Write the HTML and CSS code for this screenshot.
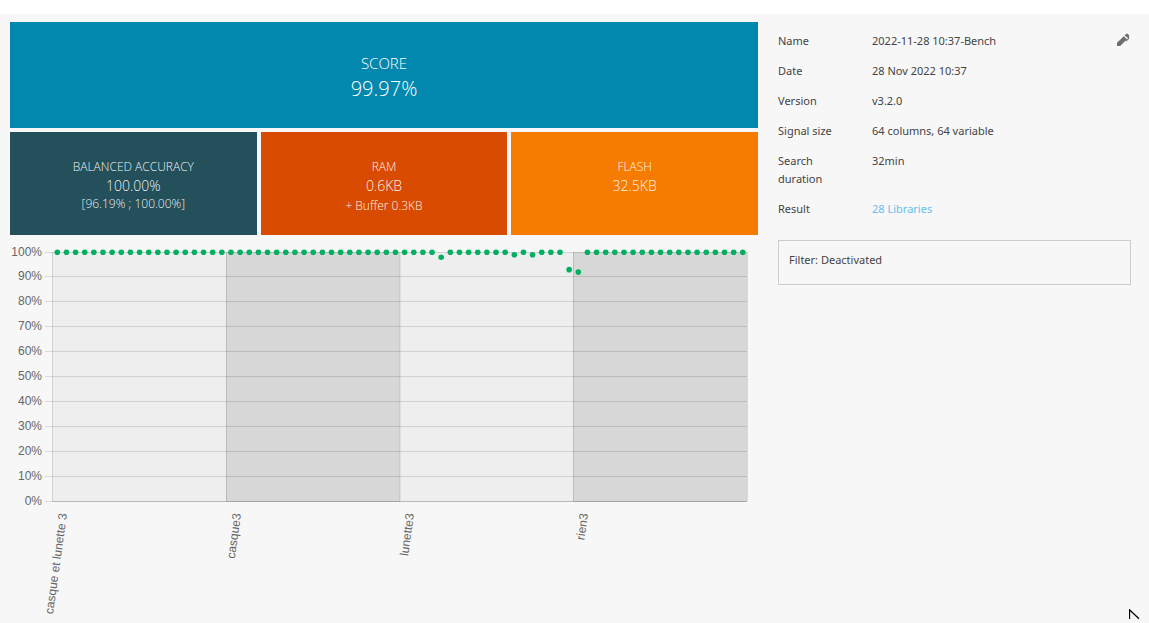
FILE: index.html
```html
<!DOCTYPE html>
<html lang="en">
<head>
<meta charset="utf-8">
<meta name="viewport" content="width=device-width, initial-scale=1">
<title>Benchmark result</title>
<link rel="stylesheet" href="styles.css">
</head>
<body>
<main class="panel">
  <section class="results">
    <div class="tiles">
      <div class="tile tile-score">
        <span class="score-label">SCORE</span>
        <span class="score-value">99.97%</span>
      </div>
      <div class="tile tile-accuracy">
        <span class="tile-label">BALANCED ACCURACY</span>
        <span class="tile-value">100.00%</span>
        <span class="tile-note">[96.19% ; 100.00%]</span>
      </div>
      <div class="tile tile-ram">
        <span class="tile-label">RAM</span>
        <span class="tile-value">0.6KB</span>
        <span class="tile-note tile-note-buffer">+ Buffer 0.3KB</span>
      </div>
      <div class="tile tile-flash">
        <span class="tile-label">FLASH</span>
        <span class="tile-value">32.5KB</span>
      </div>
    </div>
    <svg class="chart" viewBox="10 240 748 380" role="img" aria-label="Accuracy per class">
      <g class="bands">
        <rect class="band-light" x="52" y="252" width="174" height="250"/>
        <rect class="band-dark" x="226" y="252" width="174" height="250"/>
        <rect class="band-light" x="400" y="252" width="173" height="250"/>
        <rect class="band-dark" x="573" y="252" width="174" height="250"/>
      </g>
      <path class="grid-line" d="M45 252.5H747M45 276.5H747M45 301.5H747M45 326.5H747M45 351.5H747M45 376.5H747M45 401.5H747M45 426.5H747M45 451.5H747M45 476.5H747M45 501.5H747"/>
      <path class="grid-line" d="M52.5 252V501M226.5 252V501M400 252V501M573.5 252V501M747.5 252V501M52 501.5H747"/>
      <g class="axis-y">
        <text x="42" y="256">100%</text>
        <text x="42" y="280">90%</text>
        <text x="42" y="305">80%</text>
        <text x="42" y="330">70%</text>
        <text x="42" y="355">60%</text>
        <text x="42" y="380">50%</text>
        <text x="42" y="405">40%</text>
        <text x="42" y="430">30%</text>
        <text x="42" y="455">20%</text>
        <text x="42" y="480">10%</text>
        <text x="42" y="505">0%</text>
      </g>
      <g class="axis-x">
        <text transform="translate(67 514) rotate(-82)">casque et lunette 3</text>
        <text transform="translate(241 514) rotate(-82)">casque3</text>
        <text transform="translate(414 514) rotate(-82)">lunette3</text>
        <text transform="translate(588 514) rotate(-82)">rien3</text>
      </g>
      <g class="points" id="points"></g>
    </svg>
  </section>
  <aside class="details">
    <dl class="facts">
      <div class="fact">
        <dt>Name</dt>
        <dd>2022-11-28 10:37-Bench</dd>
        <dd class="fact-action">
          <button class="edit" type="button" aria-label="Edit name">
            <svg viewBox="0 0 14 14" width="14" height="14"><path d="M1 13v-3.200L7.800 3.200 11 6.200 4.200 13zM8.600 2.400l1.800-1.700q.6-.5 1.200 0l.6.7.7.5q.7.800.1 1.500l.1 2.300-2.700 2.800-.7-.7 2.200-2.300-.2-.8z"/></svg>
          </button>
        </dd>
      </div>
      <div class="fact"><dt>Date</dt><dd>28 Nov 2022 10:37</dd></div>
      <div class="fact"><dt>Version</dt><dd>v3.2.0</dd></div>
      <div class="fact"><dt>Signal size</dt><dd>64 columns, 64 variable</dd></div>
      <div class="fact"><dt>Search duration</dt><dd>32min</dd></div>
      <div class="fact"><dt>Result</dt><dd><a class="link" href="#libraries">28 Libraries</a></dd></div>
    </dl>
    <p class="filter">Filter: Deactivated</p>
  </aside>
  <svg class="pointer" viewBox="0 0 11 11" width="11" height="11" aria-hidden="true"><path d="M.5 10V.8L10 9.800"/></svg>
</main>
<script src="chart.js"></script>
</body>
</html>
```
FILE: styles.css
```css
* {
  box-sizing: border-box;
}

body {
  margin: 0;
  padding-top: 14px;
  background: #fff;
  color: #444;
  font: 11px/18px "Noto Sans", "Open Sans", sans-serif;
}

.panel {
  position: relative;
  display: grid;
  grid-template-columns: minmax(0, 748fr) minmax(0, 353fr);
  align-items: start;
  gap: 20px;
  min-height: calc(100vh - 14px);
  padding: 8px 18px 0 10px;
  background: #f7f7f7;
}

.tiles {
  display: grid;
  grid-template-columns: repeat(3, minmax(0, 1fr));
  gap: 4px;
}

.tile {
  display: flex;
  flex-direction: column;
  align-items: center;
  min-height: 103px;
  padding: 26px 8px 16px;
  color: rgba(255, 255, 255, 0.95);
  font-family: "Open Sans", "Noto Sans", sans-serif;
  font-weight: 300;
  text-align: center;
}

.tile-score {
  grid-column: 1 / -1;
  min-height: 106px;
  padding-top: 30px;
  background: #0288ae;
  color: #fff;
}

.tile-accuracy {
  background: #24505c;
}

.tile-ram {
  background: #d84b00;
}

.tile-flash {
  background: #f57c00;
}

.score-label {
  font-size: 15px;
  line-height: 22px;
}

.score-value {
  font-size: 20px;
  line-height: 30px;
}

.tile-label {
  font-size: 12px;
}

.tile-value {
  font-size: 14px;
  line-height: 20px;
}

.tile-note {
  font-size: 12px;
  line-height: 16px;
}

.tile-note-buffer {
  line-height: 20px;
}

.chart {
  display: block;
  width: 100%;
  margin-top: 5px;
}

.band-light {
  fill: #eee;
}

.band-dark {
  fill: #d7d7d7;
}

.grid-line {
  fill: none;
  stroke: rgba(0, 0, 0, 0.12);
}

.axis-y,
.axis-x {
  fill: #666;
  font: 12px "Liberation Sans", Arial, sans-serif;
  text-anchor: end;
}

.points {
  fill: #00b060;
}

.facts {
  margin: 4px 0 16px;
}

.fact {
  display: grid;
  grid-template-columns: 74px minmax(0, 1fr) auto;
  column-gap: 20px;
  padding: 6px 0;
}

.fact dd {
  margin: 0;
}

.edit {
  display: block;
  padding: 1px 1px 0 0;
  border: 0;
  background: none;
  cursor: pointer;
}

.edit svg {
  display: block;
  fill: #6e6e6e;
}

.link {
  color: #66c0e8;
  text-decoration: none;
}

.filter {
  margin: 0;
  padding: 10px 10px 15px;
  border: 1px solid #ccc;
}

.pointer {
  position: absolute;
  right: 9px;
  bottom: 3px;
  fill: none;
  stroke: #000;
  stroke-width: 1.3;
}
```
FILE: chart.js
```js
// Accuracy of each sample; every sample not listed here scores 100%.
const lowScores = { 42: 98, 50: 99, 52: 99, 56: 93, 57: 92 };
const points = document.getElementById("points");
for (let i = 0; i < 76; i++) {
  const score = i in lowScores ? lowScores[i] : 100;
  const dot = document.createElementNS("http://www.w3.org/2000/svg", "circle");
  dot.setAttribute("cx", 57.3 + i * 9.14);
  dot.setAttribute("cy", 252.2 + (100 - score) * 2.49);
  dot.setAttribute("r", 2.8);
  points.append(dot);
}
```
